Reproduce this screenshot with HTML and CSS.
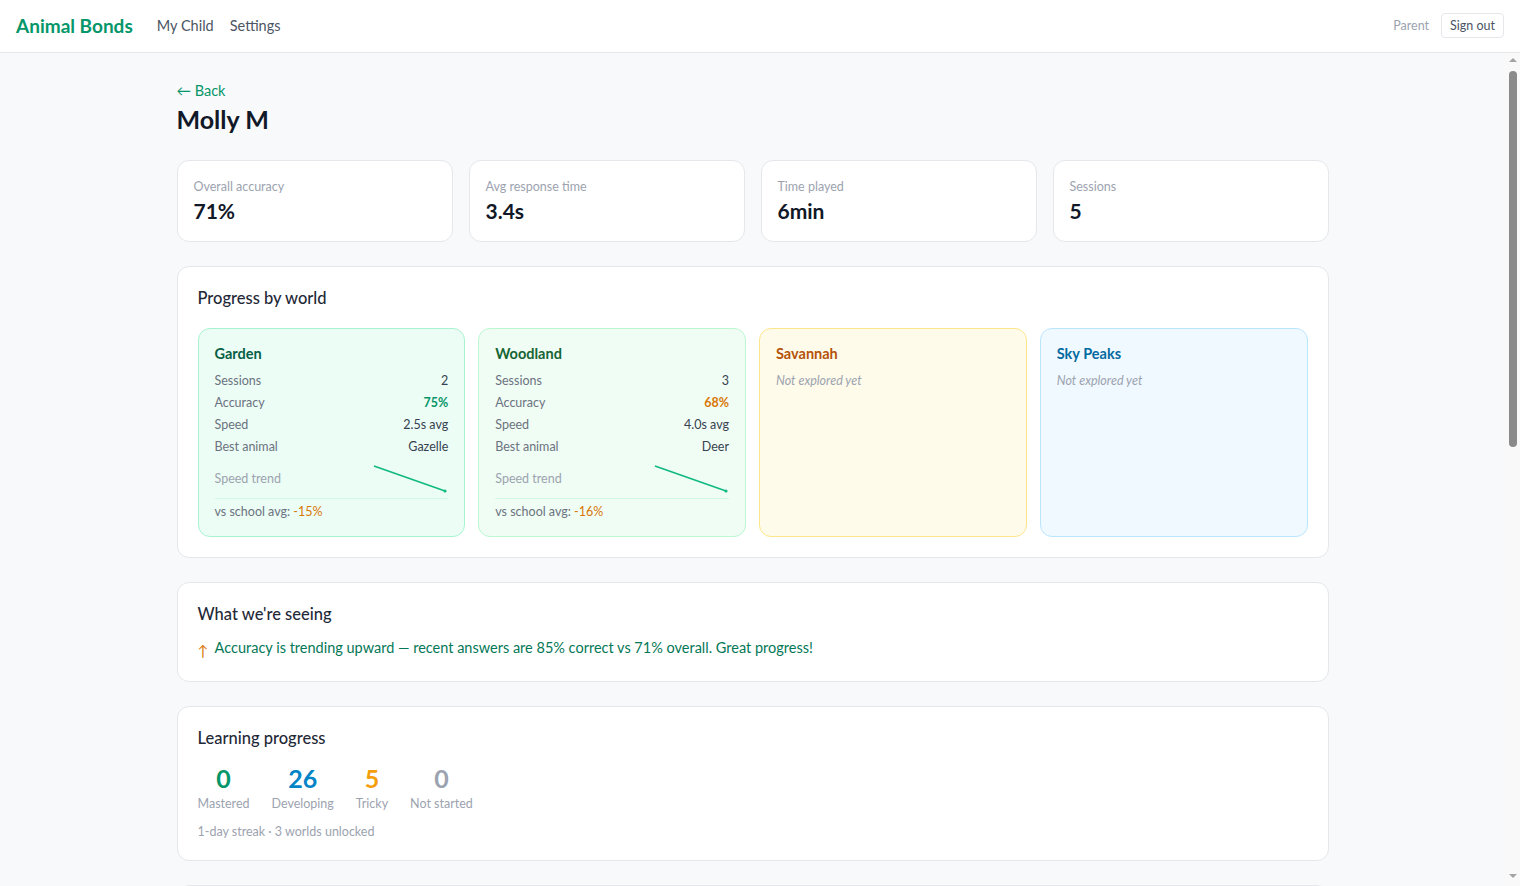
FILE: index.html
```html
<!DOCTYPE html>
<html>
<head>
  <title>Animal Bonds - Molly M</title>
  <meta name="viewport" content="width=device-width, initial-scale=1">
  <link rel="stylesheet" href="styles.css">
</head>
<body>
  <!-- Top bar -->
  <header class="topbar">
    <div class="topbar-left">
      <a class="brand" href="#">Animal Bonds</a>
      <nav class="nav">
        <a href="#">My Child</a>
        <a href="#">Settings</a>
      </nav>
    </div>
    <div class="topbar-right">
      <span class="role">Parent</span>
      <button class="signout">Sign out</button>
    </div>
  </header>

  <div class="page">
  <main class="main">
    <div class="container">
      <a class="back" href="#">&larr; Back</a>
      <h1 class="child-name">Molly M</h1>

      <!-- Summary stats -->
      <div class="stats">
        <div class="stat">
          <div class="stat-label">Overall accuracy</div>
          <div class="stat-value">71%</div>
        </div>
        <div class="stat">
          <div class="stat-label">Avg response time</div>
          <div class="stat-value">3.4s</div>
        </div>
        <div class="stat">
          <div class="stat-label">Time played</div>
          <div class="stat-value">6min</div>
        </div>
        <div class="stat">
          <div class="stat-label">Sessions</div>
          <div class="stat-value">5</div>
        </div>
      </div>

      <!-- Worlds -->
      <section class="card">
        <h2 class="card-title">Progress by world</h2>
        <div class="worlds">
          <div class="world garden">
            <div class="world-name">Garden</div>
            <div class="row"><span>Sessions</span><span class="val">2</span></div>
            <div class="row"><span>Accuracy</span><span class="val good">75%</span></div>
            <div class="row"><span>Speed</span><span class="val">2.5s avg</span></div>
            <div class="row"><span>Best animal</span><span class="val">Gazelle</span></div>
            <div class="trend">
              <span>Speed trend</span>
              <svg width="76" height="30" viewBox="0 0 76 30">
                <polyline points="2,3 73,28" fill="none" stroke="#10b981" stroke-width="1.6"/>
                <circle cx="73" cy="28" r="1.6" fill="#10b981"/>
              </svg>
            </div>
            <div class="compare">vs school avg: <span class="warn">-15%</span></div>
          </div>

          <div class="world woodland">
            <div class="world-name">Woodland</div>
            <div class="row"><span>Sessions</span><span class="val">3</span></div>
            <div class="row"><span>Accuracy</span><span class="val warn">68%</span></div>
            <div class="row"><span>Speed</span><span class="val">4.0s avg</span></div>
            <div class="row"><span>Best animal</span><span class="val">Deer</span></div>
            <div class="trend">
              <span>Speed trend</span>
              <svg width="76" height="30" viewBox="0 0 76 30">
                <polyline points="2,3 73,28" fill="none" stroke="#10b981" stroke-width="1.6"/>
                <circle cx="73" cy="28" r="1.6" fill="#10b981"/>
              </svg>
            </div>
            <div class="compare">vs school avg: <span class="warn">-16%</span></div>
          </div>

          <div class="world savannah">
            <div class="world-name">Savannah</div>
            <div class="empty">Not explored yet</div>
          </div>

          <div class="world sky">
            <div class="world-name">Sky Peaks</div>
            <div class="empty">Not explored yet</div>
          </div>
        </div>
      </section>

      <!-- Insights -->
      <section class="card">
        <h2 class="card-title">What we're seeing</h2>
        <p class="insight"><span class="insight-arrow">&uarr;</span> Accuracy is trending upward &mdash; recent answers are 85% correct vs 71% overall. Great progress!</p>
      </section>

      <!-- Learning progress -->
      <section class="card">
        <h2 class="card-title">Learning progress</h2>
        <div class="counts">
          <div class="count"><div class="count-num mastered">0</div><div class="count-label">Mastered</div></div>
          <div class="count"><div class="count-num developing">26</div><div class="count-label">Developing</div></div>
          <div class="count"><div class="count-num tricky">5</div><div class="count-label">Tricky</div></div>
          <div class="count"><div class="count-num notstarted">0</div><div class="count-label">Not started</div></div>
        </div>
        <div class="streak">1-day streak &middot; 3 worlds unlocked</div>
      </section>

      <!-- Recent sessions -->
      <section class="card">
        <h2 class="card-title">Recent sessions</h2>
        <div class="session"><span>Woodland</span><span>8 answers &middot; 63%</span></div>
        <div class="session"><span>Woodland</span><span>6 answers &middot; 67%</span></div>
        <div class="session"><span>Garden</span><span>7 answers &middot; 86%</span></div>
        <div class="session"><span>Woodland</span><span>5 answers &middot; 80%</span></div>
        <div class="session"><span>Garden</span><span>6 answers &middot; 67%</span></div>
      </section>

      <section class="card">
        <h2 class="card-title">Animals met</h2>
        <div class="session"><span>Gazelle</span><span>Garden</span></div>
        <div class="session"><span>Rabbit</span><span>Garden</span></div>
        <div class="session"><span>Deer</span><span>Woodland</span></div>
        <div class="session"><span>Fox</span><span>Woodland</span></div>
        <div class="session"><span>Owl</span><span>Woodland</span></div>
      </section>
    </div>
  </main>

  <div class="rail">
    <span class="rail-up"></span>
    <span class="rail-thumb"></span>
    <span class="rail-down"></span>
  </div>
  </div>
</body>
</html>
```

FILE: styles.css
```css
/* Page frame */
* {
  box-sizing: border-box;
}

html, body {
  height: 100%;
}

body {
  margin: 0;
  display: flex;
  flex-direction: column;
  font-family: "Lato", "Noto Sans", sans-serif;
  color: #1f2937;
  background: #f8f9fb;
}

a {
  text-decoration: none;
}

/* Top bar */
.topbar {
  flex: none;
  height: 53px;
  display: flex;
  align-items: center;
  justify-content: space-between;
  padding: 0 16px 2px;
  background: #fff;
  border-bottom: 1px solid #e5e7eb;
}

.topbar-left {
  display: flex;
  align-items: center;
  gap: 24px;
}

.brand {
  font-size: 19px;
  font-weight: 700;
  color: #059669;
}

.nav {
  display: flex;
  gap: 16px;
}

.nav a {
  font-size: 14.5px;
  color: #4b5563;
}

.topbar-right {
  display: flex;
  align-items: center;
  gap: 12px;
}

.role {
  font-size: 12.5px;
  color: #9ca3af;
}

.signout {
  font-family: inherit;
  font-size: 12.5px;
  color: #4b5563;
  background: #fff;
  border: 1px solid #e5e7eb;
  border-radius: 4px;
  padding: 4px 8px;
  height: 25px;
}

/* Scrolling area */
.page {
  flex: 1;
  min-height: 0;
  display: flex;
}

.main {
  flex: 1;
  overflow-y: auto;
  scrollbar-width: none;
}

.main::-webkit-scrollbar {
  display: none;
}

.rail {
  flex: none;
  width: 15px;
  display: flex;
  flex-direction: column;
  align-items: center;
  padding: 5px 0 8px;
  background: #f9f9f9;
}

.rail-up {
  width: 0;
  height: 0;
  border-left: 4px solid transparent;
  border-right: 4px solid transparent;
  border-bottom: 4px solid #a3a3a3;
}

.rail-thumb {
  width: 8px;
  height: 376px;
  margin-top: 9px;
  background: #8a8a8a;
  border-radius: 4px;
}

.rail-down {
  width: 0;
  height: 0;
  margin-top: auto;
  border-left: 4px solid transparent;
  border-right: 4px solid transparent;
  border-top: 4px solid #a3a3a3;
}

.container {
  max-width: 1152px;
  margin: 0 auto;
  padding: 27px 0 40px;
}

.back {
  display: inline-block;
  font-size: 14.5px;
  color: #059669;
}

.child-name {
  margin: 5px 0 26px;
  font-size: 25px;
  font-weight: 700;
  color: #111827;
}

/* Summary stats */
.stats {
  display: grid;
  grid-template-columns: repeat(4, 1fr);
  gap: 16px;
  margin-bottom: 24px;
}

.stat {
  height: 82px;
  padding: 18px 16px 16px;
  background: #fff;
  border: 1px solid #e5e7eb;
  border-radius: 12px;
}

.stat-label {
  font-size: 12.5px;
  color: #9ca3af;
}

.stat-value {
  margin-top: 4px;
  font-size: 21px;
  font-weight: 700;
  color: #111827;
}

/* Cards */
.card {
  background: #fff;
  border: 1px solid #e5e7eb;
  border-radius: 12px;
  padding: 21px 20px 20px;
  margin-bottom: 24px;
}

.card-title {
  margin: 0 0 14px;
  font-size: 16.5px;
  line-height: 20px;
  font-weight: 500;
  color: #1f2937;
}

/* World cards */
.worlds {
  display: grid;
  grid-template-columns: repeat(4, 1fr);
  gap: 13px;
  margin-top: 20px;
}

.world {
  height: 209px;
  padding: 16px;
  border: 1px solid;
  border-radius: 12px;
}

.world-name {
  font-size: 14.5px;
  font-weight: 700;
  margin-bottom: 8px;
}

.garden {
  background: #ecfdf5;
  border-color: #a7f3d0;
}

.garden .world-name {
  color: #065f46;
}

.woodland {
  background: #f0fdf4;
  border-color: #bbf7d0;
}

.woodland .world-name {
  color: #166534;
}

.savannah {
  background: #fffbeb;
  border-color: #fde68a;
}

.savannah .world-name {
  color: #b45309;
}

.sky {
  background: #f0f9ff;
  border-color: #bae6fd;
}

.sky .world-name {
  color: #0369a1;
}

.row {
  display: flex;
  justify-content: space-between;
  font-size: 12.5px;
  line-height: 22px;
  color: #6b7280;
}

.val {
  color: #374151;
}

.good {
  color: #059669;
  font-weight: 700;
}

.warn {
  color: #d97706;
}

.val.warn {
  font-weight: 700;
}

.trend {
  display: flex;
  justify-content: space-between;
  align-items: flex-end;
  margin-top: 5px;
  padding-bottom: 5px;
  border-bottom: 1px solid #d1fae5;
  font-size: 12.5px;
  color: #9ca3af;
}

.trend span {
  padding-bottom: 7px;
}

.compare {
  margin-top: 5px;
  font-size: 12.5px;
  color: #6b7280;
}

.empty {
  font-size: 12.5px;
  font-style: italic;
  color: #9ca3af;
  line-height: 22px;
}

/* Insights */
.insight {
  margin: 0 0 3px;
  font-size: 14.5px;
  line-height: 20px;
  color: #047857;
}

.insight-arrow {
  color: #d97706;
  position: relative;
  top: 3px;
  margin-right: 3px;
}

/* Learning progress */
.counts {
  display: flex;
  gap: 22px;
}

.count {
  text-align: center;
}

.count-num {
  font-size: 25px;
  font-weight: 700;
  line-height: 32px;
}

.count-label {
  margin-top: 2px;
  font-size: 12.5px;
  line-height: 16px;
  color: #9ca3af;
}

.mastered {
  color: #059669;
}

.developing {
  color: #0284c7;
}

.tricky {
  color: #f59e0b;
}

.notstarted {
  color: #9ca3af;
}

.streak {
  margin-top: 12px;
  font-size: 12.5px;
  line-height: 16px;
  color: #9ca3af;
}

/* Lists further down */
.session {
  display: flex;
  justify-content: space-between;
  font-size: 13px;
  line-height: 36px;
  color: #4b5563;
  border-bottom: 1px solid #f3f4f6;
}
```
